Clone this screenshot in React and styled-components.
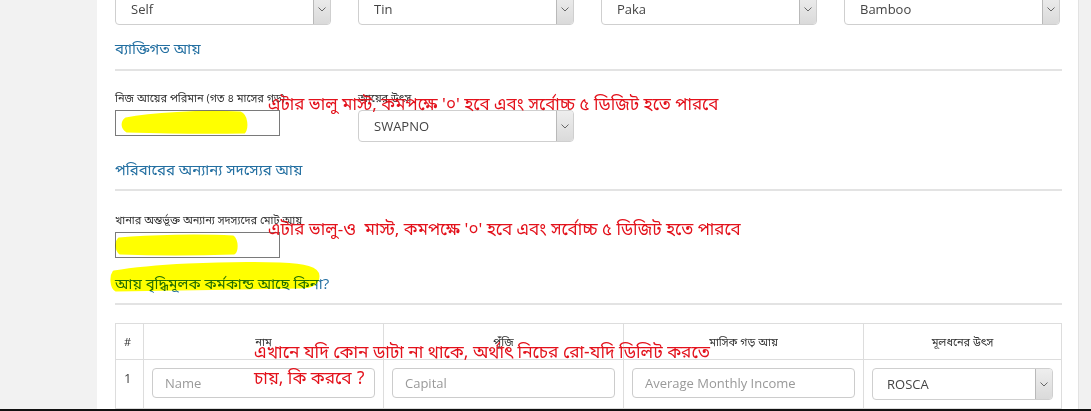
import React from "react";
import styled, { createGlobalStyle } from "styled-components";

const GlobalStyle = createGlobalStyle`
  html, body {
    margin: 0;
    padding: 0;
    background: #f1f1f1;
    font-family: "Open Sans", "Noto Sans Bengali", "Noto Sans", sans-serif;
  }
`;

const Page = styled.div`
  position: relative;
  width: 1091px;
  height: 411px;
  overflow: hidden;
  display: flex;
  flex-direction: column;
`;

const Body = styled.div`
  flex: 1;
  display: flex;
  min-height: 0;
`;

const LeftGutter = styled.div`
  width: 97px;
  background: #f2f2f2;
`;

const RightGutter = styled.div`
  width: 12px;
  background: #f1f1f1;
  border-left: 1px solid #e2e2e2;
`;

const Panel = styled.div`
  flex: 1;
  background: #fff;
  padding: 0 16px 0 18px;
  overflow: hidden;
`;

const Content = styled.div`
  margin-top: -7px;
`;

const TaskBar = styled.div`
  height: 2px;
  background: #111;
`;

const Grid4 = styled.div`
  display: grid;
  grid-template-columns: repeat(4, 216px);
  column-gap: 27px;
`;

const SelectBox = styled.div`
  position: relative;
  height: 32px;
  box-sizing: border-box;
  border: 1px solid #cfcfcf;
  border-radius: 4px;
  display: flex;
  align-items: center;
  padding-left: ${(p) => p.$pad || 14}px;
  font-size: 13px;
  color: #444;
  background: #fff;
  overflow: hidden;
`;

const ArrowButton = styled.div`
  position: absolute;
  right: 0;
  top: 0;
  bottom: 0;
  width: 16px;
  border-left: 1px solid #b9b9b9;
  background: linear-gradient(#eeeeee, #dadada);
  display: flex;
  align-items: center;
  justify-content: center;
`;

const SectionTitle = styled.div`
  font-size: 15px;
  line-height: 20px;
  color: #236fa1;
  margin-top: ${(p) => p.$top}px;
`;

const Divider = styled.div`
  height: 2px;
  background: #e3e3e3;
  margin-top: ${(p) => p.$top}px;
`;

const Field = styled.div`
  display: flex;
  flex-direction: column;
`;

const Label = styled.div`
  font-size: 11px;
  line-height: 14px;
  color: #333;
  height: 14px;
  margin-bottom: 5px;
  white-space: nowrap;
`;

const PlainInput = styled.div`
  width: 165px;
  height: 26px;
  box-sizing: border-box;
  border: 1px solid #7a7a7a;
  background: #fff;
`;

const FieldBlock = styled.div`
  margin-top: ${(p) => p.$top}px;
`;

const Table = styled.table`
  margin-top: 18px;
  width: 947px;
  border-collapse: collapse;
  table-layout: fixed;
  border: 1px solid #dddddd;
`;

const HeadCell = styled.th`
  height: 35px;
  padding: 0 8px;
  border-right: 1px solid #dddddd;
  border-bottom: 1px solid #dddddd;
  font-size: 11px;
  font-weight: normal;
  color: #333;
  text-align: ${(p) => p.$align || "center"};
  vertical-align: middle;
`;

const Cell = styled.td`
  height: 30px;
  padding: 8px;
  border-right: 1px solid #dddddd;
  font-size: 13px;
  color: #444;
  vertical-align: top;
`;

const RowNumber = styled.div`
  padding-top: 1px;
`;

const TextBox = styled.div`
  height: 30px;
  box-sizing: border-box;
  border: 1px solid #cccccc;
  border-radius: 4px;
  padding-left: 12px;
  display: flex;
  align-items: center;
  font-size: 13px;
  color: #999;
`;

const Note = styled.div`
  position: absolute;
  left: ${(p) => p.$x}px;
  top: ${(p) => p.$y}px;
  color: #e3111b;
  font-size: ${(p) => p.$size || 17}px;
  line-height: 24px;
  white-space: nowrap;
  font-family: "Noto Sans Bengali", "Noto Sans", sans-serif;
`;

const Marker = styled.svg`
  position: absolute;
  left: 0;
  top: 0;
  mix-blend-mode: multiply;
  pointer-events: none;
`;

function Chevron() {
  return (
    <svg width="8" height="5" viewBox="0 0 8 5">
      <path d="M0.5 0.5 L4 4 L7.5 0.5" fill="none" stroke="#666" strokeWidth="1" />
    </svg>
  );
}

function Select({ value, pad }) {
  return (
    <SelectBox $pad={pad}>
      {value}
      <ArrowButton>
        <Chevron />
      </ArrowButton>
    </SelectBox>
  );
}

export default function App() {
  return (
    <>
      <GlobalStyle />
      <Page>
        <Body>
          <LeftGutter />
          <Panel>
            <Content>
              <Grid4>
                <Select value="Self" pad={15} />
                <Select value="Tin" pad={15} />
                <Select value="Paka" pad={15} />
                <Select value="Bamboo" pad={15} />
              </Grid4>

              <SectionTitle $top={13}>ব্যাক্তিগত আয়</SectionTitle>
              <Divider $top={11} />

              <FieldBlock $top={20}>
                <Grid4>
                  <Field>
                    <Label>নিজ আয়ের পরিমান (গত ৪ মাসের গড়)</Label>
                    <PlainInput />
                  </Field>
                  <Field>
                    <Label>আয়ের উৎস</Label>
                    <Select value="SWAPNO" pad={15} />
                  </Field>
                </Grid4>
              </FieldBlock>

              <SectionTitle $top={17}>পরিবারের অন্যান্য সদস্যের আয়</SectionTitle>
              <Divider $top={10} />

              <FieldBlock $top={22}>
                <Field>
                  <Label>খানার অন্তর্ভূক্ত অন্যান্য সদস্যদের মোট আয়</Label>
                  <PlainInput />
                </Field>
              </FieldBlock>

              <SectionTitle $top={15}>আয় বৃদ্ধিমূলক কর্মকান্ড আছে কিনা?</SectionTitle>
              <Divider $top={10} />

              <Table>
                <colgroup>
                  <col style={{ width: 28 }} />
                  <col style={{ width: 240 }} />
                  <col style={{ width: 240 }} />
                  <col style={{ width: 240 }} />
                  <col />
                </colgroup>
                <thead>
                  <tr>
                    <HeadCell $align="left">#</HeadCell>
                    <HeadCell>নাম</HeadCell>
                    <HeadCell>পুঁজি</HeadCell>
                    <HeadCell>মাসিক গড় আয়</HeadCell>
                    <HeadCell>মূলধনের উৎস</HeadCell>
                  </tr>
                </thead>
                <tbody>
                  <tr>
                    <Cell>
                      <RowNumber>1</RowNumber>
                    </Cell>
                    <Cell>
                      <TextBox>Name</TextBox>
                    </Cell>
                    <Cell>
                      <TextBox>Capital</TextBox>
                    </Cell>
                    <Cell>
                      <TextBox>Average Monthly Income</TextBox>
                    </Cell>
                    <Cell>
                      <Select value="ROSCA" pad={14} />
                    </Cell>
                  </tr>
                </tbody>
              </Table>
            </Content>
          </Panel>
          <RightGutter />
        </Body>
        <TaskBar />

        <Marker width="1091" height="411" viewBox="0 0 1091 411">
          <path
            d="M126 119 C150 114 200 111 240 113 C247 116 247 128 244 132 C200 133 160 132 127 131 C122 128 122 122 126 119 Z"
            fill="#ffff00"
            stroke="#ffff00"
            strokeWidth="3"
            strokeLinejoin="round"
          />
          <path
            d="M119 239 C150 236 200 235 233 237 C237 241 237 250 234 253 C200 254 150 254 120 253 C116 249 116 242 119 239 Z"
            fill="#ffff00"
            stroke="#ffff00"
            strokeWidth="3"
            strokeLinejoin="round"
          />
          <path
            d="M114 272 C150 266 220 262 280 264 C305 265 318 268 318 276 C318 284 312 287 300 287 C240 288 170 289 116 290 C111 287 111 276 114 272 Z"
            fill="#ffff00"
            stroke="#ffff00"
            strokeWidth="3"
            strokeLinejoin="round"
          />
        </Marker>

        <Note $x={268} $y={94}>
          এটার ভালু মাস্ট, কমপক্ষে '০' হবে এবং সর্বোচ্চ ৫ ডিজিট হতে পারবে
        </Note>
        <Note $x={268} $y={219}>
          এটার ভালু-ও&nbsp; মাস্ট, কমপক্ষে '০' হবে এবং সর্বোচ্চ ৫ ডিজিট হতে পারবে
        </Note>
        <Note $x={254} $y={342} $size={17.3}>
          এখানে যদি কোন ডাটা না থাকে, অর্থাৎ নিচের রো-যদি ডিলিট করতে
        </Note>
        <Note $x={254} $y={368} $size={17.3}>
          চায়, কি করবে ?
        </Note>
      </Page>
    </>
  );
}
